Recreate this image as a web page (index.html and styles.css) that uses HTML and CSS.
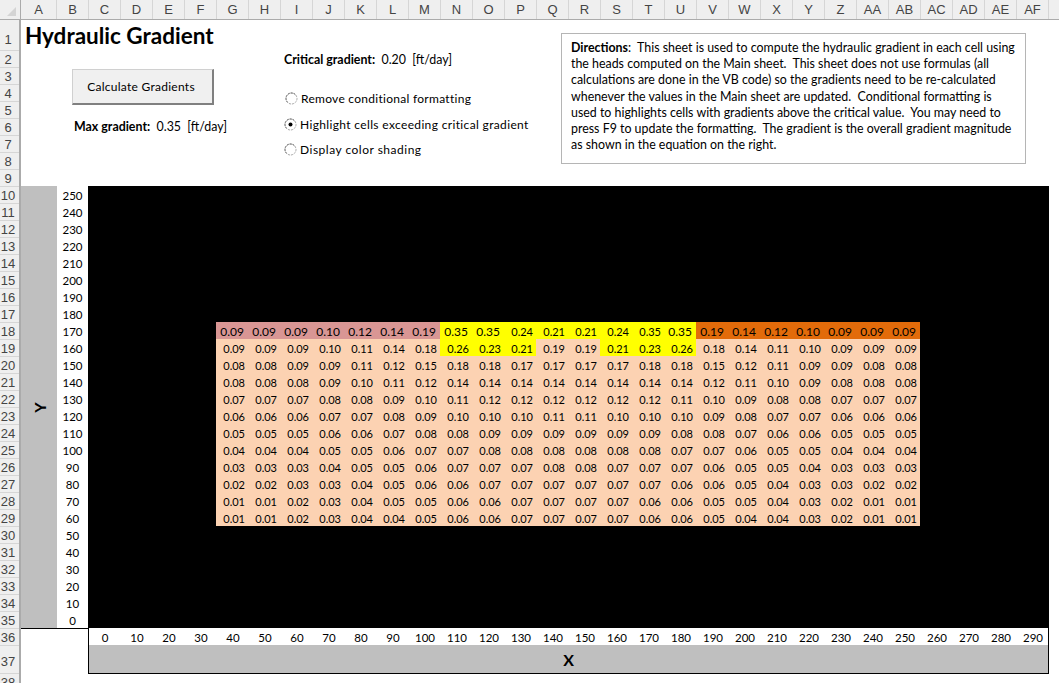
FILE: index.html
```html
<!DOCTYPE html>
<html>

<head>
    <meta charset="UTF-8">
    <title>Hydraulic Gradient</title>
    <link rel="stylesheet" href="styles.css">
</head>

<body>
    <div id="sheet">
        <div id="corner"><svg width="21" height="20"><path d="M7 16 L16 16 L16 7 Z" fill="#d4d4d4" /></svg></div>

        <div id="colHeads">
            <span class="colA">A</span><span>B</span><span>C</span><span>D</span><span>E</span><span>F</span><span>G</span><span>H</span><span>I</span><span>J</span><span>K</span><span>L</span><span>M</span><span>N</span><span>O</span><span>P</span><span>Q</span><span>R</span><span>S</span><span>T</span><span>U</span><span>V</span><span>W</span><span>X</span><span>Y</span><span>Z</span><span>AA</span><span>AB</span><span>AC</span><span>AD</span><span>AE</span><span>AF</span>
        </div>

        <div id="rowHeads">
            <span class="row1">1</span><span>2</span><span>3</span><span>4</span><span>5</span><span>6</span><span>7</span><span>8</span><span>9</span><span>10</span><span>11</span><span>12</span><span>13</span><span>14</span><span>15</span><span>16</span><span>17</span><span>18</span><span>19</span><span>20</span><span>21</span><span>22</span><span>23</span><span>24</span><span>25</span><span>26</span><span>27</span><span>28</span><span>29</span><span>30</span><span>31</span><span>32</span><span>33</span><span>34</span><span>35</span><span>36</span><span class="row37">37</span><span>38</span>
        </div>

        <div id="pane">
            <div id="top">
                <div id="leftCol">
                    <h1>Hydraulic Gradient</h1>
                    <button type="button" id="calcButton">Calculate Gradients</button>
                    <p class="reading maxReading"><b>Max gradient:</b>  0.35  [ft/day]</p>
                </div>

                <div id="midCol">
                    <p class="reading"><b>Critical gradient:</b>  0.20  [ft/day]</p>
                    <div id="options">
                        <label class="option firstOption">
                            <svg width="13" height="13"><circle cx="6.5" cy="6.5" r="5.5" fill="#fff" stroke="#a6a6a6" stroke-dasharray="2 1" /><path d="M2.6 10.4 A5.5 5.5 0 0 1 10.4 2.6" fill="none" stroke="#707070" stroke-dasharray="2 1" /></svg>
                            Remove conditional formatting
                        </label>
                        <label class="option">
                            <svg width="13" height="13"><circle cx="6.5" cy="6.5" r="5.5" fill="#fff" stroke="#a6a6a6" stroke-dasharray="2 1" /><path d="M2.6 10.4 A5.5 5.5 0 0 1 10.4 2.6" fill="none" stroke="#707070" stroke-dasharray="2 1" /><circle cx="6.5" cy="6.5" r="2" fill="#000" /></svg>
                            Highlight cells exceeding critical gradient
                        </label>
                        <label class="option lastOption">
                            <svg width="13" height="13"><circle cx="6.5" cy="6.5" r="5.5" fill="#fff" stroke="#a6a6a6" stroke-dasharray="2 1" /><path d="M2.6 10.4 A5.5 5.5 0 0 1 10.4 2.6" fill="none" stroke="#707070" stroke-dasharray="2 1" /></svg>
                            Display color shading
                        </label>
                    </div>
                </div>

                <div id="directions"><b>Directions</b>:  This sheet is used to compute the hydraulic gradient in each cell using
the heads computed on the Main sheet.  This sheet does not use formulas (all
calculations are done in the VB code) so the gradients need to be re-calculated
whenever the values in the Main sheet are updated.  Conditional formatting is
used to highlights cells with gradients above the critical value.  You may need to
press F9 to update the formatting.  The gradient is the overall gradient magnitude
as shown in the equation on the right.</div>
            </div>

            <div id="plot">
                <div id="yTitle"><b>Y</b></div>
                <div id="yAxis">
                    <span>250</span><span>240</span><span>230</span><span>220</span><span>210</span><span>200</span><span>190</span><span>180</span><span>170</span><span>160</span><span>150</span><span>140</span><span>130</span><span>120</span><span>110</span><span>100</span><span>90</span><span>80</span><span>70</span><span>60</span><span>50</span><span>40</span><span>30</span><span>20</span><span>10</span><span>0</span>
                </div>
                <div id="field">
                    <div id="values">
                        <span class="red big">0.09</span><span class="red big">0.09</span><span class="red big">0.09</span><span class="red big">0.10</span><span class="red big">0.12</span><span class="red big">0.14</span><span class="red big">0.19</span><span class="yel big">0.35</span><span class="yel big">0.35</span><span class="yel">0.24</span><span class="yel">0.21</span><span class="yel">0.21</span><span class="yel">0.24</span><span class="yel">0.35</span><span class="yel big">0.35</span><span class="org big">0.19</span><span class="org big">0.14</span><span class="org big">0.12</span><span class="org big">0.10</span><span class="org big">0.09</span><span class="org big">0.09</span><span class="org big">0.09</span>
                        <span>0.09</span><span>0.09</span><span>0.09</span><span>0.10</span><span>0.11</span><span>0.14</span><span>0.18</span><span class="yel">0.26</span><span class="yel">0.23</span><span class="yel">0.21</span><span>0.19</span><span>0.19</span><span class="yel">0.21</span><span class="yel">0.23</span><span class="yel">0.26</span><span>0.18</span><span>0.14</span><span>0.11</span><span>0.10</span><span>0.09</span><span>0.09</span><span>0.09</span>
                        <span>0.08</span><span>0.08</span><span>0.09</span><span>0.09</span><span>0.11</span><span>0.12</span><span>0.15</span><span>0.18</span><span>0.18</span><span>0.17</span><span>0.17</span><span>0.17</span><span>0.17</span><span>0.18</span><span>0.18</span><span>0.15</span><span>0.12</span><span>0.11</span><span>0.09</span><span>0.09</span><span>0.08</span><span>0.08</span>
                        <span>0.08</span><span>0.08</span><span>0.08</span><span>0.09</span><span>0.10</span><span>0.11</span><span>0.12</span><span>0.14</span><span>0.14</span><span>0.14</span><span>0.14</span><span>0.14</span><span>0.14</span><span>0.14</span><span>0.14</span><span>0.12</span><span>0.11</span><span>0.10</span><span>0.09</span><span>0.08</span><span>0.08</span><span>0.08</span>
                        <span>0.07</span><span>0.07</span><span>0.07</span><span>0.08</span><span>0.08</span><span>0.09</span><span>0.10</span><span>0.11</span><span>0.12</span><span>0.12</span><span>0.12</span><span>0.12</span><span>0.12</span><span>0.12</span><span>0.11</span><span>0.10</span><span>0.09</span><span>0.08</span><span>0.08</span><span>0.07</span><span>0.07</span><span>0.07</span>
                        <span>0.06</span><span>0.06</span><span>0.06</span><span>0.07</span><span>0.07</span><span>0.08</span><span>0.09</span><span>0.10</span><span>0.10</span><span>0.10</span><span>0.11</span><span>0.11</span><span>0.10</span><span>0.10</span><span>0.10</span><span>0.09</span><span>0.08</span><span>0.07</span><span>0.07</span><span>0.06</span><span>0.06</span><span>0.06</span>
                        <span>0.05</span><span>0.05</span><span>0.05</span><span>0.06</span><span>0.06</span><span>0.07</span><span>0.08</span><span>0.08</span><span>0.09</span><span>0.09</span><span>0.09</span><span>0.09</span><span>0.09</span><span>0.09</span><span>0.08</span><span>0.08</span><span>0.07</span><span>0.06</span><span>0.06</span><span>0.05</span><span>0.05</span><span>0.05</span>
                        <span>0.04</span><span>0.04</span><span>0.04</span><span>0.05</span><span>0.05</span><span>0.06</span><span>0.07</span><span>0.07</span><span>0.08</span><span>0.08</span><span>0.08</span><span>0.08</span><span>0.08</span><span>0.08</span><span>0.07</span><span>0.07</span><span>0.06</span><span>0.05</span><span>0.05</span><span>0.04</span><span>0.04</span><span>0.04</span>
                        <span>0.03</span><span>0.03</span><span>0.03</span><span>0.04</span><span>0.05</span><span>0.05</span><span>0.06</span><span>0.07</span><span>0.07</span><span>0.07</span><span>0.08</span><span>0.08</span><span>0.07</span><span>0.07</span><span>0.07</span><span>0.06</span><span>0.05</span><span>0.05</span><span>0.04</span><span>0.03</span><span>0.03</span><span>0.03</span>
                        <span>0.02</span><span>0.02</span><span>0.03</span><span>0.03</span><span>0.04</span><span>0.05</span><span>0.06</span><span>0.06</span><span>0.07</span><span>0.07</span><span>0.07</span><span>0.07</span><span>0.07</span><span>0.07</span><span>0.06</span><span>0.06</span><span>0.05</span><span>0.04</span><span>0.03</span><span>0.03</span><span>0.02</span><span>0.02</span>
                        <span>0.01</span><span>0.01</span><span>0.02</span><span>0.03</span><span>0.04</span><span>0.05</span><span>0.05</span><span>0.06</span><span>0.06</span><span>0.07</span><span>0.07</span><span>0.07</span><span>0.07</span><span>0.06</span><span>0.06</span><span>0.05</span><span>0.05</span><span>0.04</span><span>0.03</span><span>0.02</span><span>0.01</span><span>0.01</span>
                        <span>0.01</span><span>0.01</span><span>0.02</span><span>0.03</span><span>0.04</span><span>0.04</span><span>0.05</span><span>0.06</span><span>0.06</span><span>0.07</span><span>0.07</span><span>0.07</span><span>0.07</span><span>0.06</span><span>0.06</span><span>0.05</span><span>0.04</span><span>0.04</span><span>0.03</span><span>0.02</span><span>0.01</span><span>0.01</span>
                    </div>
                </div>
            </div>

            <div id="bottom">
                <div id="bottomLeft"></div>
                <div id="xBlock">
                    <div id="xAxis">
                        <span>0</span><span>10</span><span>20</span><span>30</span><span>40</span><span>50</span><span>60</span><span>70</span><span>80</span><span>90</span><span>100</span><span>110</span><span>120</span><span>130</span><span>140</span><span>150</span><span>160</span><span>170</span><span>180</span><span>190</span><span>200</span><span>210</span><span>220</span><span>230</span><span>240</span><span>250</span><span>260</span><span>270</span><span>280</span><span>290</span>
                    </div>
                    <div id="xTitle"><b>X</b></div>
                </div>
            </div>
        </div>
    </div>
</body>

</html>
```

FILE: styles.css
```css
html,
body {
    margin: 0;
    height: 683px;
    overflow: hidden;
    background-color: #fff;
}

body {
    font-family: "Lato", "Open Sans", sans-serif;
    font-size: 12px;
    color: #000;
}

#sheet {
    display: grid;
    grid-template-columns: 21px 1038px;
    grid-template-rows: 20px 663px;
}

#corner {
    background-color: #efefef;
    border-right: 1px solid #ababab;
    border-bottom: 1px solid #ababab;
    box-sizing: border-box;
    overflow: hidden;
}

#colHeads {
    display: flex;
    background-color: #efefef;
    border-bottom: 1px solid #ababab;
    box-sizing: border-box;
    font-family: "Liberation Sans", sans-serif;
    font-size: 13px;
    color: #444;
}

#colHeads span {
    flex: none;
    width: 32px;
    box-sizing: border-box;
    border-right: 1px solid #d6d6d6;
    text-align: center;
    line-height: 19px;
}

#colHeads .colA {
    width: 36px;
}

#rowHeads {
    display: flex;
    flex-direction: column;
    background-color: #efefef;
    border-right: 2px solid #ababab;
    box-sizing: border-box;
    font-family: "Liberation Sans", sans-serif;
    font-size: 13px;
    color: #444;
    overflow: hidden;
}

#rowHeads span {
    flex: none;
    height: 17px;
    line-height: 17px;
    box-sizing: border-box;
    padding-right: 3px;
    text-align: center;
    border-bottom: 1px solid #d6d6d6;
}

#rowHeads .row1 {
    height: 31px;
    line-height: 40px;
}

#rowHeads .row37 {
    height: 28px;
    line-height: 32px;
}

#pane {
    height: 663px;
    overflow: hidden;
}

#top {
    display: flex;
    height: 166px;
}

#leftCol {
    width: 259px;
    padding-left: 4px;
}

h1 {
    margin: 0;
    height: 31px;
    font-size: 22.5px;
    line-height: 32px;
    font-weight: 700;
    white-space: nowrap;
}

#calcButton {
    display: block;
    width: 142px;
    height: 36px;
    margin: 18px 0 0 47px;
    background-color: #f0f0f0;
    border: 1px solid #d0d0d0;
    border-right: 2px solid #808080;
    border-bottom: 2px solid #808080;
    font-family: inherit;
    font-size: 12px;
    letter-spacing: 0.27px;
    padding: 0 3px 0 0;
}

.reading {
    margin: 0;
    font-size: 12.4px;
    line-height: 16px;
    white-space: pre;
}

.maxReading {
    margin: 14px 0 0 49px;
}

#midCol {
    width: 277px;
    padding-top: 32px;
}

#options {
    margin-top: 22px;
    display: flex;
    flex-direction: column;
    gap: 9px;
}

.option {
    display: flex;
    align-items: center;
    gap: 3px;
    height: 17px;
    font-size: 12px;
    letter-spacing: 0.35px;
    white-space: nowrap;
}

.firstOption {
    margin-left: 1px;
    letter-spacing: 0.28px;
}

.lastOption {
    margin-top: -1px;
    letter-spacing: 0.5px;
}

#directions {
    width: 465px;
    height: 131px;
    margin-top: 13px;
    box-sizing: border-box;
    padding: 6px 0 0 9px;
    border: 1px solid #b5b5b5;
    font-size: 12.4px;
    line-height: 16.2px;
    white-space: pre;
}

#plot {
    display: flex;
    height: 442px;
}

#yTitle {
    display: flex;
    align-items: center;
    justify-content: center;
    width: 36px;
    background-color: #bfbfbf;
    font-size: 16px;
}

#yTitle b {
    transform: rotate(-90deg);
}

#yAxis {
    width: 31px;
    display: flex;
    flex-direction: column;
    text-align: center;
}

#yAxis span,
#xAxis span,
#values span {
    font-size: 11.5px;
    height: 17px;
    line-height: 19px;
}

#field {
    width: 961px;
    box-sizing: border-box;
    padding: 136px 0 0 128px;
    background-color: #000;
}

#values {
    display: grid;
    grid-template-columns: repeat(22, 32px);
    grid-auto-rows: 17px;
    width: 704px;
    background-color: #fcd2b2;
}

#values span {
    font-size: 11px;
    text-align: right;
    padding-right: 3px;
}

#values .red {
    background-color: #d99694;
}

#values .org {
    background-color: #e26b0a;
}

#values .yel {
    background-color: #ffff00;
}

#values .big {
    font-size: 12px;
    padding-right: 4px;
}

#bottom {
    display: flex;
    height: 46px;
}

#bottomLeft {
    width: 67px;
    box-sizing: border-box;
    border-top: 1px solid #000;
}

#xBlock {
    width: 961px;
    box-sizing: border-box;
    border-left: 1px solid #000;
    border-right: 1px solid #000;
    border-bottom: 1px solid #000;
}

#xAxis {
    display: flex;
    height: 17px;
}

#xAxis span {
    flex: none;
    width: 32px;
    text-align: center;
}

#xTitle {
    height: 28px;
    background-color: #bfbfbf;
    text-align: center;
    font-size: 16px;
    line-height: 30px;
}
```
